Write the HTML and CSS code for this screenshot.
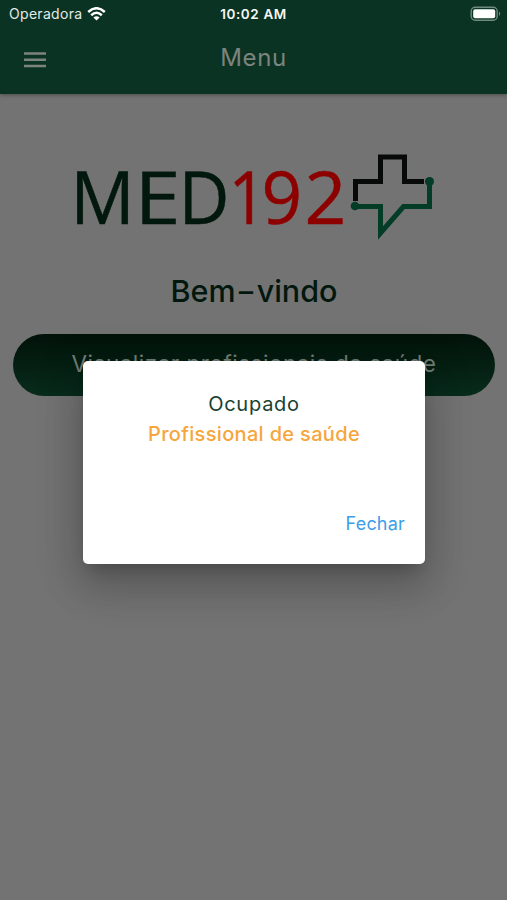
FILE: index.html
```html
<!DOCTYPE html>
<html lang="pt-BR">
<head>
<meta charset="utf-8">
<title>MED192</title>
<link rel="stylesheet" href="styles.css">
</head>
<body>
<header class="top">
  <div class="status">
    <div class="carrier"><span>Operadora</span>
      <svg width="19" height="14" viewBox="0 0 19 14" fill="none" stroke="#fff" stroke-width="2.5"><path d="M1.2 5Q9.5-2.5 17.8 5M4.2 8.2Q9.500 3.400 14.800 8.200"/><path d="M6.400 10.500Q9.500 7.900 12.600 10.500L9.500 13.600Z" fill="#fff" stroke="none"/></svg>
    </div>
    <span class="time">10:02 AM</span>
    <svg class="battery" width="32" height="16" viewBox="0 0 32 16"><rect x="1.200" y="1.200" width="26" height="13" rx="4" fill="none" stroke="#6f8a7e" stroke-width="1.400"/><rect x="3.200" y="3.200" width="22" height="9" rx="2" fill="#fff"/><path d="M29 5.500Q31.500 7.700 29 10Z" fill="#6f8a7e"/></svg>
  </div>
  <div class="bar">
    <svg class="menu-icon" width="22" height="16" viewBox="0 0 22 16" stroke="#7d837d" stroke-width="2.400"><path d="M0 1.500H22M0 7.800H22M0 14H22"/></svg>
    <h1 class="title">Menu</h1>
    <span></span>
  </div>
</header>
<main class="page">
  <svg class="logo" width="386" height="130" viewBox="-10 -24 386 130">
    <g class="word">
      <text transform="translate(-.800 72) scale(.970 1)">M</text>
      <text transform="translate(63.500 72) scale(1.120 1)">E</text>
      <text transform="translate(107.500 72) scale(.950 1)">D</text>
      <g class="red">
        <text transform="translate(157.500 72) scale(.900 1)">1</text>
        <text transform="translate(190.500 72) scale(.960 1)">9</text>
        <text transform="translate(233.500 72) scale(.990 1)">2</text>
      </g>
    </g>
    <g fill="none" stroke-width="5">
      <path d="M284.500 49V29.500H309.500V5H333.500V29.500H353" stroke="#080a09"/>
      <path d="M284 54.500H309.500V81L332.500 54.500H358.500V30" stroke="#033d27"/>
    </g>
    <g fill="#033d27"><circle cx="284" cy="54" r="4.300"/><circle cx="358.500" cy="29.500" r="4.500"/></g>
  </svg>
  <h2 class="welcome">Bem<span class="dash">-</span>vindo</h2>
  <button class="cta">Visualizar profissionais da saúde</button>
</main>
<section class="dialog" role="dialog">
  <p class="state">Ocupado</p>
  <p class="role">Profissional de saúde</p>
  <button class="close">Fechar</button>
</section>
</body>
</html>
```
FILE: styles.css
```css
* { box-sizing: border-box; }
body { margin: 0; height: 900px; overflow: hidden; position: relative; background: #737373; font-family: Inter, "Liberation Sans", sans-serif; }
h1, h2, p { margin: 0; font-weight: 400; }
button { border: 0; font-family: inherit; }
.top { position: relative; height: 94px; background: #0b3323; box-shadow: 0 1px 4px rgba(0,0,0,.35); }
.status { display: grid; grid-template-columns: 1fr auto 1fr; align-items: center; height: 28px; padding: 0 5px 0 9px; color: #fff; font-size: 14px; }
.carrier { display: flex; align-items: center; gap: 5px; color: #e3eae5; letter-spacing: .3px; }
.carrier span { position: relative; top: -1px; }
.time { font-weight: 600; font-size: 13.5px; letter-spacing: .6px; color: #f5f8f6; transform: translateX(-2px); }
.battery { justify-self: end; }
.bar { display: grid; grid-template-columns: 1fr auto 1fr; align-items: center; height: 58px; padding: 0 24px; }
.menu-icon { margin-top: 5px; }
.title { font-size: 24px; font-weight: 400; color: #7d837d; letter-spacing: .6px; }
.page { display: flex; flex-direction: column; align-items: center; padding: 34px 12px 0 13px; }
.logo { display: block; }
.word { font-family: "Open Sans", sans-serif; font-size: 74px; fill: #02170d; stroke: #02170d; stroke-width: .5; }
.red { fill: #8d0000; stroke: #8d0000; }
.welcome { margin-top: 11px; height: 44px; line-height: 44px; font-size: 30.5px; font-weight: 500; color: #02180e; white-space: nowrap; }
.dash { display: inline-block; transform: scaleX(1.45); margin: 0 4px 0 3px; }
.cta { width: 100%; height: 62px; margin-top: 21px; padding: 0 0 4px; border-radius: 31px; background: linear-gradient(#021209, #082c1c); color: #747d77; font-size: 22.5px; font-weight: 400; letter-spacing: .5px; white-space: nowrap; }
.dialog { position: absolute; left: 83px; top: 361px; width: 342px; height: 203px; padding: 28px 20px 26px; display: flex; flex-direction: column; align-items: center; background: #fff; border-radius: 5px; box-shadow: 0 11px 15px -7px rgba(0,0,0,.2), 0 24px 38px 3px rgba(0,0,0,.14), 0 9px 46px 8px rgba(0,0,0,.12); }
.state { font-size: 20px; line-height: 30px; letter-spacing: .75px; color: #174231; }
.role { font-size: 20px; line-height: 30px; font-weight: 500; letter-spacing: .33px; color: #f6a63d; }
.close { margin-top: auto; align-self: flex-end; padding: 0; background: none; font-size: 18px; line-height: 28px; letter-spacing: .2px; color: #3c9de8; }
```
